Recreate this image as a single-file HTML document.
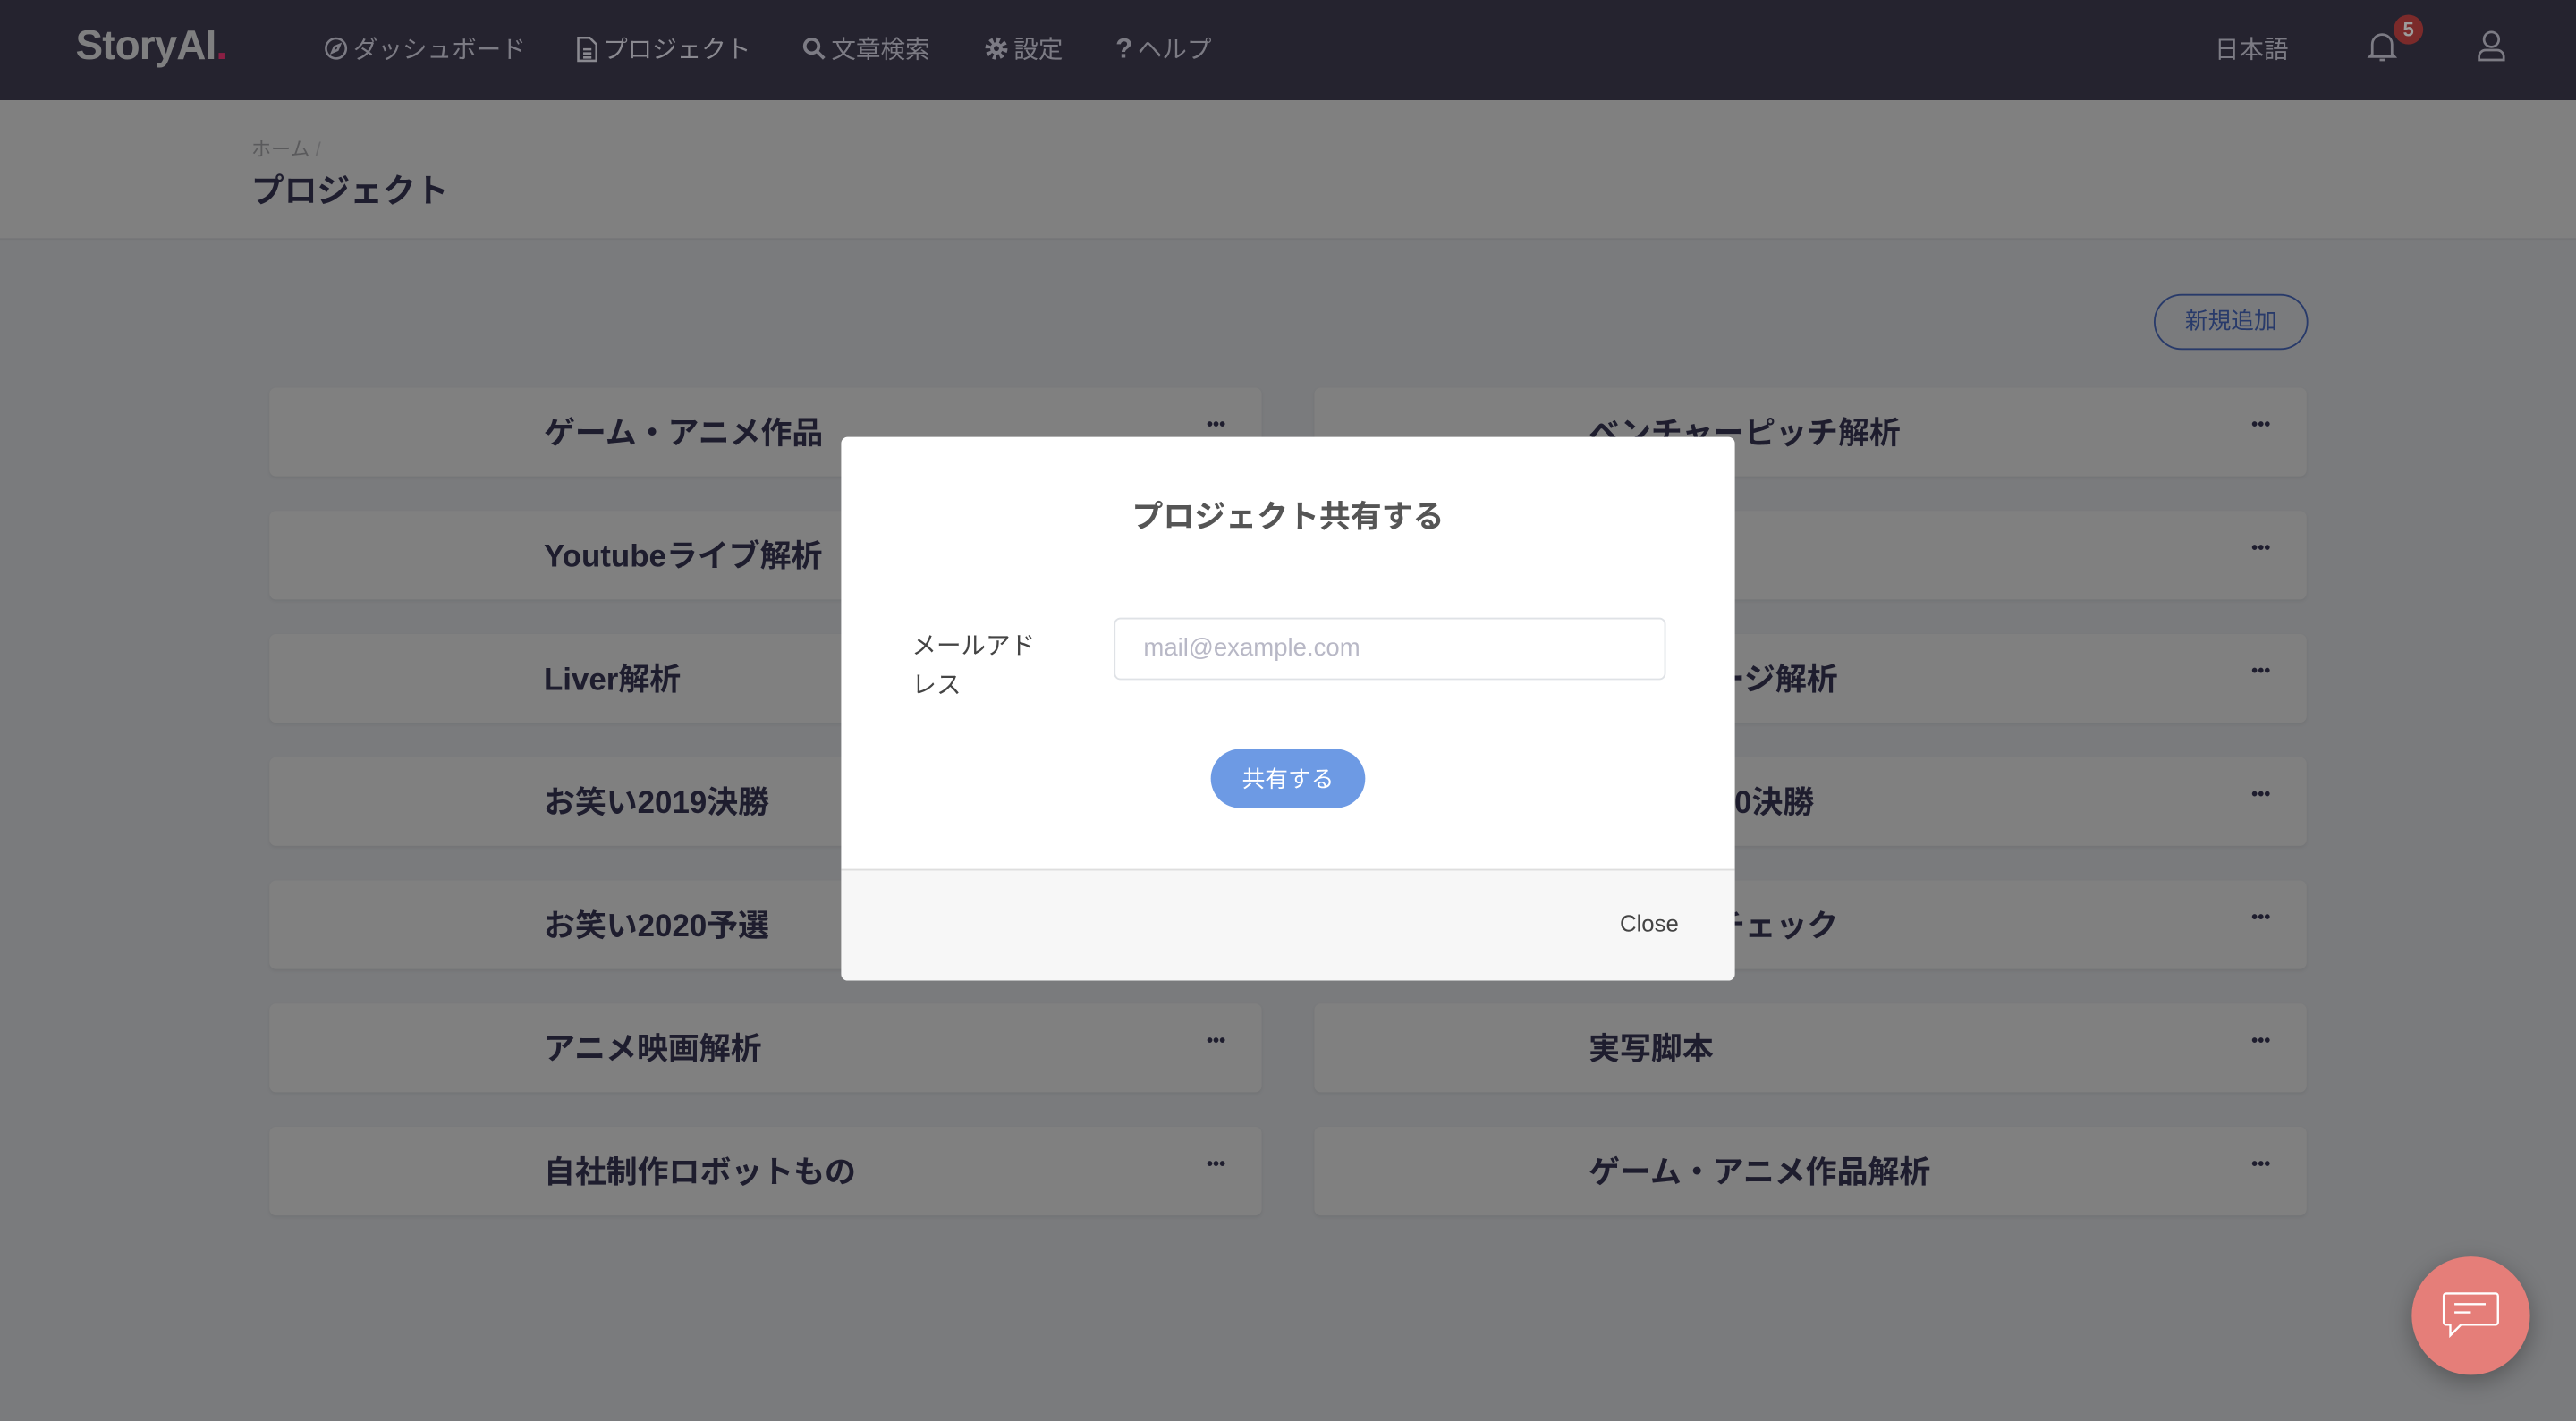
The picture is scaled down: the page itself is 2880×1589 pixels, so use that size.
<!DOCTYPE html>
<html><head><meta charset="utf-8"><style>
*{margin:0;padding:0;box-sizing:border-box}
body{width:2880px;height:1588px;overflow:hidden;background:#7a7b7d;font-family:"Liberation Sans","Noto Sans CJK JP",sans-serif}
#w{width:1568px;height:865px;transform:scale(1.836735);transform-origin:0 0;position:relative;background:#7a7b7d}
.a{position:absolute}
.nav{left:0;top:0;width:1568px;height:61px;background:#25232f}
.nv{color:#7c7b84;font-size:15px;top:19px;display:flex;align-items:center;gap:3px}
.hdr{left:0;top:61px;width:1568px;height:85px;background:#808080;border-bottom:1px solid #747577}
.card{background:#808080;border-radius:4px;height:54px;width:604px;box-shadow:0 1px 2px rgba(0,0,0,.06)}
.card span{position:absolute;left:167px;top:13px;font-size:19px;font-weight:bold;color:#1e1d2e}
.card i{position:absolute;right:22px;top:17px;font-style:normal;font-weight:bold;color:#1e1d2e;font-size:11px;letter-spacing:0px}
</style></head><body><div id="w">
<div class="a nav"></div>
<div class="a" style="left:46px;top:14px;font-size:25px;font-weight:600;color:#7f7f80;letter-spacing:-0.5px">StoryAI<span style="color:#8a1f44">.</span></div>
<div class="a nv" style="left:197px"><svg width="15" height="15" viewBox="0 0 16 16" fill="none" stroke="#7c7b84" stroke-width="1.5"><circle cx="8" cy="8" r="6.5"/><path d="M10.5 5.5L9 9 5.5 10.5 7 7z"/></svg>ダッシュボード</div>
<div class="a nv" style="left:351px;color:#8a8990"><svg width="13" height="16" viewBox="0 0 13 16" fill="none" stroke="#8a8990" stroke-width="1.4"><path d="M1 1h7l4 4v10H1z"/><path d="M4 8h5M4 10.5h5M4 13h5"/></svg>プロジェクト</div>
<div class="a nv" style="left:488px"><svg width="15" height="15" viewBox="0 0 16 16" fill="none" stroke="#7c7b84" stroke-width="2.2"><circle cx="6.5" cy="6.5" r="4.5"/><path d="M10 10l4.5 4.5"/></svg>文章検索</div>
<div class="a nv" style="left:599px"><svg width="15" height="15" viewBox="0 0 16 16"><circle cx="8" cy="8" r="5.5" fill="none" stroke="#7c7b84" stroke-width="3.5" stroke-dasharray="2.2 2.1"/><circle cx="8" cy="8" r="4" fill="#7c7b84"/><circle cx="8" cy="8" r="1.7" fill="#25232f"/></svg>設定</div>
<div class="a nv" style="left:679px"><b style="font-size:17px">?</b>ヘルプ</div>
<div class="a nv" style="left:1348px">日本語</div>
<svg class="a" style="left:1441px;top:18px" width="18" height="20" viewBox="0 0 18 20" fill="none" stroke="#7c7b84" stroke-width="1.5"><path d="M3 15V9a6 6 0 0 1 12 0v6l1.5 1.5h-15z"/><path d="M7.5 18.5h3"/></svg>
<div class="a" style="left:1457px;top:9px;width:18px;height:18px;border-radius:50%;background:#7b2a2a;color:#9c9c9c;font-size:12px;font-weight:bold;text-align:center;line-height:18px">5</div>
<svg class="a" style="left:1507px;top:18px" width="19" height="20" viewBox="0 0 19 20" fill="none" stroke="#7c7b84" stroke-width="1.5"><circle cx="9.5" cy="6" r="4.5"/><path d="M2 18.5v-2a4 4 0 0 1 4-4h7a4 4 0 0 1 4 4v2z"/></svg>
<div class="a hdr"></div>
<div class="a" style="left:153px;top:82px;font-size:12px;color:#5a5a5c">ホーム <span style="color:#6a6a6c">/</span></div>
<div class="a" style="left:153px;top:100px;font-size:20px;font-weight:bold;color:#1e1d2e">プロジェクト</div>
<div class="a" style="left:1311px;top:179px;width:94px;height:34px;border:1.5px solid #283a6a;border-radius:17px;color:#283a6a;font-size:14px;text-align:center;line-height:31px">新規追加</div>

<div class="a card" style="left:164px;top:236px"><span>ゲーム・アニメ作品</span><i>•••</i></div>
<div class="a card" style="left:800px;top:236px"><span>ベンチャーピッチ解析</span><i>•••</i></div>
<div class="a card" style="left:164px;top:311px"><span>Youtubeライブ解析</span><i>•••</i></div>
<div class="a card" style="left:800px;top:311px"><span></span><i>•••</i></div>
<div class="a card" style="left:164px;top:386px"><span>Liver解析</span><i>•••</i></div>
<div class="a card" style="left:800px;top:386px"><span>　メッセージ解析</span><i>•••</i></div>
<div class="a card" style="left:164px;top:461px"><span>お笑い2019決勝</span><i>•••</i></div>
<div class="a card" style="left:800px;top:461px"><span>お笑い2020決勝</span><i>•••</i></div>
<div class="a card" style="left:164px;top:536px"><span>お笑い2020予選</span><i>•••</i></div>
<div class="a card" style="left:800px;top:536px"><span>台本解析チェック</span><i>•••</i></div>
<div class="a card" style="left:164px;top:611px"><span>アニメ映画解析</span><i>•••</i></div>
<div class="a card" style="left:800px;top:611px"><span>実写脚本</span><i>•••</i></div>
<div class="a card" style="left:164px;top:686px"><span>自社制作ロボットもの</span><i>•••</i></div>
<div class="a card" style="left:800px;top:686px"><span>ゲーム・アニメ作品解析</span><i>•••</i></div>

<div class="a" style="left:512px;top:266px;width:544px;height:331px;background:#fff;border-radius:4px;overflow:hidden">
 <div class="a" style="left:0;top:34px;width:544px;text-align:center;font-size:19px;font-weight:bold;color:#555">プロジェクト共有する</div>
 <div class="a" style="left:43px;top:116px;width:78px;font-size:15px;line-height:24px;color:#444">メールアドレス</div>
 <div class="a" style="left:166px;top:110px;width:336px;height:38px;border:1px solid #dfe2e6;border-radius:4px;font-size:15px;color:#b8b8c6;padding:9px 17px">mail@example.com</div>
 <div class="a" style="left:225px;top:190px;width:94px;height:36px;border-radius:18px;background:#6d9ae4;color:#fff;font-size:14px;text-align:center;line-height:36px">共有する</div>
 <div class="a" style="left:0;top:263px;width:544px;height:68px;background:#f7f7f7;border-top:1px solid #dedede"></div>
 <div class="a" style="left:474px;top:288px;font-size:14px;color:#444">Close</div>
</div>
<div class="a" style="left:1468px;top:765px;width:72px;height:72px;border-radius:50%;background:#e57e79;box-shadow:0 4px 14px rgba(0,0,0,.3)"></div>
<svg class="a" style="left:1486px;top:786px" width="36" height="32" viewBox="0 0 36 32" fill="none" stroke="#fff" stroke-width="1.3"><path d="M3 1.5h30a1.5 1.5 0 0 1 1.5 1.5v16a1.5 1.5 0 0 1-1.5 1.5H12L5.5 27v-6.5H3A1.5 1.5 0 0 1 1.5 19V3A1.5 1.5 0 0 1 3 1.5z"/><path d="M8 8h19M8 13h10"/></svg>
</div></body></html>
